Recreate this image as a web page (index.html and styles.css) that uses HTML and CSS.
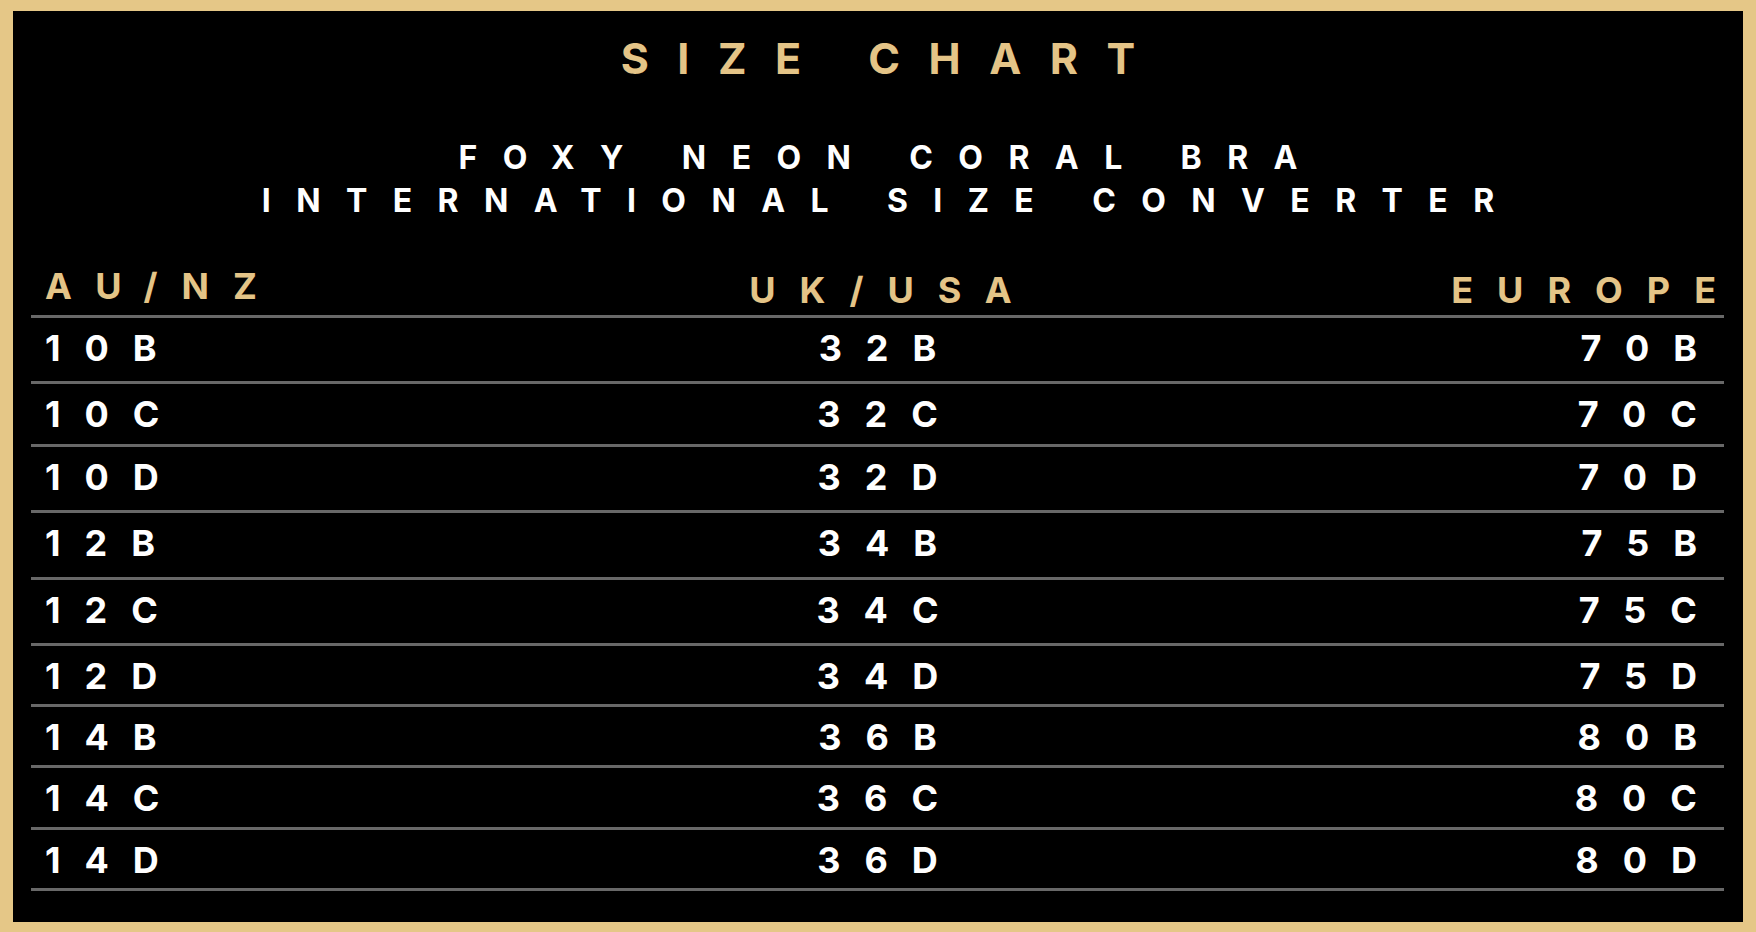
FILE: index.html
```html
<!DOCTYPE html>
<html lang="en">
<head>
<meta charset="utf-8">
<title>Size Chart</title>
<link rel="stylesheet" href="styles.css">
</head>
<body>
<div class="frame">
  <h1 class="title"><span class="t">SIZE CHART</span></h1>
  <h2 class="subtitle"><span class="t">FOXY NEON CORAL BRA</span><br><span class="t">INTERNATIONAL SIZE CONVERTER</span></h2>
  <div class="chart">
    <div class="row head">
      <div class="c1"><span class="t">AU/NZ</span></div>
      <div class="c2"><span class="t">UK/USA</span></div>
      <div class="c3"><span class="t">EUROPE</span></div>
    </div>
    <div class="row"><div class="c1"><span class="t">10B</span></div><div class="c2"><span class="t">32B</span></div><div class="c3"><span class="t">70B</span></div></div>
    <div class="row"><div class="c1"><span class="t">10C</span></div><div class="c2"><span class="t">32C</span></div><div class="c3"><span class="t">70C</span></div></div>
    <div class="row"><div class="c1"><span class="t">10D</span></div><div class="c2"><span class="t">32D</span></div><div class="c3"><span class="t">70D</span></div></div>
    <div class="row"><div class="c1"><span class="t">12B</span></div><div class="c2"><span class="t">34B</span></div><div class="c3"><span class="t">75B</span></div></div>
    <div class="row"><div class="c1"><span class="t">12C</span></div><div class="c2"><span class="t">34C</span></div><div class="c3"><span class="t">75C</span></div></div>
    <div class="row"><div class="c1"><span class="t">12D</span></div><div class="c2"><span class="t">34D</span></div><div class="c3"><span class="t">75D</span></div></div>
    <div class="row"><div class="c1"><span class="t">14B</span></div><div class="c2"><span class="t">36B</span></div><div class="c3"><span class="t">80B</span></div></div>
    <div class="row"><div class="c1"><span class="t">14C</span></div><div class="c2"><span class="t">36C</span></div><div class="c3"><span class="t">80C</span></div></div>
    <div class="row"><div class="c1"><span class="t">14D</span></div><div class="c2"><span class="t">36D</span></div><div class="c3"><span class="t">80D</span></div></div>
  </div>
</div>
</body>
</html>
```

FILE: styles.css
```css
html, body {
  margin: 0;
  padding: 0;
  background: #000;
}

.frame {
  box-sizing: border-box;
  width: 1756px;
  height: 932px;
  border-style: solid;
  border-color: #e5c787;
  border-width: 11px 13px 10px 13px;
  background: #000;
  font-family: Inter, "Liberation Sans", sans-serif;
  font-weight: 700;
  color: #fff;
  overflow: hidden;
}

.title {
  margin: 26px 0 0 0;
  text-align: center;
  font-size: 43px;
  line-height: 43px;
  font-weight: 700;
  letter-spacing: 28.5px;
  color: #e4c487;
}
.title .t { margin-right: -28.5px; }

.subtitle {
  margin: 56px 0 0 0;
  text-align: center;
  font-size: 32px;
  line-height: 43px;
  font-weight: 700;
  letter-spacing: 25.4px;
  color: #fff;
}
.subtitle .t { margin-right: -25.4px; }

.chart {
  margin: 46px 19px 0 18px;
}

.row {
  box-sizing: border-box;
  display: grid;
  grid-template-columns: 1fr 1fr 1fr;
  align-items: start;
  border-bottom: 3px solid #686868;
  font-size: 36px;
  line-height: 36px;
  letter-spacing: 24px;
  padding: 12px 27px 0 14px;
  height: 62px;
}
.row .t { margin-right: -24px; }

.row .c1 { text-align: left; }
.row .c2 { text-align: center; padding-left: 13px; }
.row .c3 { text-align: right; }

.head {
  color: #e4c487;
  padding: 0 8px 0 14px;
  height: 50px;
}
.head .c2 { padding-left: 0; padding-top: 4px; }
.head .c3 { padding-top: 4px; }

.row:nth-child(2) { height: 66px; }
.row:nth-child(3) { height: 63px; }
.row:nth-child(4) { height: 66px; }
.row:nth-child(5) { height: 67px; }
.row:nth-child(6) { height: 66px; }
.row:nth-child(7) { height: 61px; }
.row:nth-child(8) { height: 61px; }
.row:nth-child(9) { height: 62px; }
.row:nth-child(10) { height: 61px; }
```
